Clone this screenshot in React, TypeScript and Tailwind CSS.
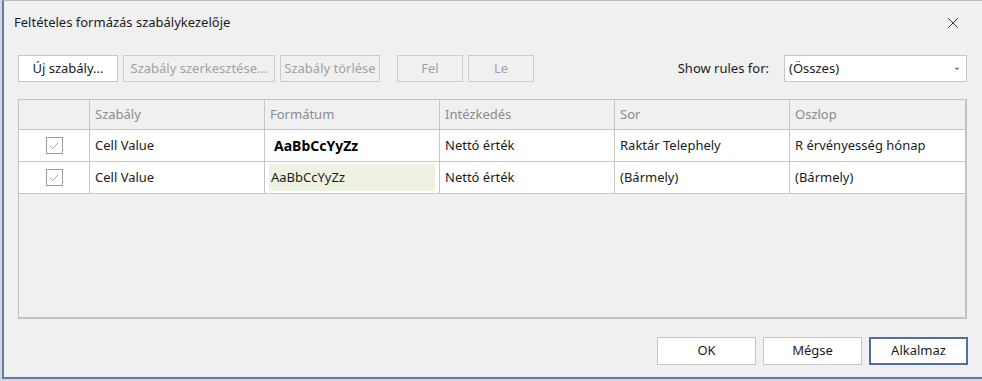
import { Check, ChevronDown, X } from 'lucide-react';

const cols = 'grid grid-cols-[71px_175px_175px_175px_175px_175px]';

const rows = [
  { format: 'bold', row: 'Raktár Telephely', col: 'R érvényesség hónap' },
  { format: 'green', row: '(Bármely)', col: '(Bármely)' },
];

const Btn = ({ label, w, disabled }: { label: string; w: string; disabled?: boolean }) => (
  <button
    className={`${w} h-[27px] flex items-center justify-center border text-[13px] ${
      disabled ? 'border-[#cccccc] text-[#a2a2a2] bg-[#f0f0f0]' : 'border-[#c6c6c6] text-[#1b1b1b] bg-white'
    }`}
  >
    {label}
  </button>
);

export default function App() {
  return (
    <div className="w-[982px] h-[381px] bg-[#d7d7d7] pl-[2px] pb-[2px]" style={{ fontFamily: '"Noto Sans", "Open Sans", sans-serif' }}>
      <div className="h-full flex flex-col bg-[#f0f0f0] border-l-2 border-b-2 border-[#5a7db4] border-t border-t-[#bdbdbd]">
        {/* title bar */}
        <div className="h-[42px] flex items-center pl-[10px] pr-[20px] pt-[1px]">
          <span className="text-[13px] text-[#1b1b1b]">Feltételes formázás szabálykezelője</span>
          <X size={18} strokeWidth={1.3} className="ml-auto text-[#333]" />
        </div>

        {/* toolbar */}
        <div className="mt-[12px] flex items-center pl-[14px] pr-[15px]">
          <Btn label="Új szabály..." w="w-[100px]" />
          <div className="ml-[5px]"><Btn label="Szabály szerkesztése..." w="w-[152px]" disabled /></div>
          <div className="ml-[5px]"><Btn label="Szabály törlése" w="w-[100px]" disabled /></div>
          <div className="ml-[17px]"><Btn label="Fel" w="w-[66px]" disabled /></div>
          <div className="ml-[5px]"><Btn label="Le" w="w-[66px]" disabled /></div>
          <span className="ml-auto text-[13px] text-[#1b1b1b]">Show rules for:</span>
          <div className="ml-[15px] w-[183px] h-[27px] border border-[#c6c6c6] bg-white flex items-center pl-[4px] pr-[4px] text-[13px] text-[#1b1b1b]">
            (Összes)
            <ChevronDown size={10} strokeWidth={0} fill="#7a7a7a" className="ml-auto" />
          </div>
        </div>

        {/* grid */}
        <div className="mt-[17px] ml-[14px] w-[949px] h-[220px] border-2 border-[#c3c3c3] border-t border-l bg-[#f0f0f0] text-[13px]">
          <div className={`${cols} h-[30px] border-b border-[#c6c6c6] text-[#8c8c8c]`}>
            <div className="border-r border-[#c6c6c6]" />
            {['Szabály', 'Formátum', 'Intézkedés', 'Sor', 'Oszlop'].map((h, i) => (
              <div key={h} className={`flex items-center pl-[5px] ${i < 4 ? 'border-r border-[#c6c6c6]' : ''}`}>
                {h}
              </div>
            ))}
          </div>
          {rows.map((r, idx) => (
            <div key={idx} className={`${cols} h-[32px] bg-white border-b border-[#c6c6c6] text-[#1b1b1b]`}>
              <div className="border-r border-[#c6c6c6] flex items-center justify-center">
                <div className="w-[17px] h-[17px] border border-[#9c9c9c] bg-white flex items-center justify-center">
                  <Check size={12} strokeWidth={1.5} className="text-[#8a8a8a]" />
                </div>
              </div>
              <div className="border-r border-[#c6c6c6] flex items-center pl-[5px]">Cell Value</div>
              <div className="border-r border-[#c6c6c6] flex items-center p-[2px_4px_2px_4px]">
                {r.format === 'bold' ? (
                  <span className="pl-[5px] font-bold text-[14px] text-black">AaBbCcYyZz</span>
                ) : (
                  <div className="w-full h-full bg-[#eef2e3] flex items-center pl-[2px]">AaBbCcYyZz</div>
                )}
              </div>
              <div className="border-r border-[#c6c6c6] flex items-center pl-[5px]">Nettó érték</div>
              <div className="border-r border-[#c6c6c6] flex items-center pl-[5px]">{r.row}</div>
              <div className="flex items-center pl-[5px]">{r.col}</div>
            </div>
          ))}
        </div>

        {/* footer */}
        <div className="mt-[18px] flex justify-end pr-[14px] gap-[7px] text-[13px] text-[#1b1b1b]">
          <button className="w-[99px] h-[28px] border border-[#c6c6c6] bg-white">OK</button>
          <button className="w-[99px] h-[28px] border border-[#c6c6c6] bg-white">Mégse</button>
          <button className="w-[99px] h-[28px] border-2 border-[#4e6f9f] bg-white">Alkalmaz</button>
        </div>
      </div>
    </div>
  );
}
